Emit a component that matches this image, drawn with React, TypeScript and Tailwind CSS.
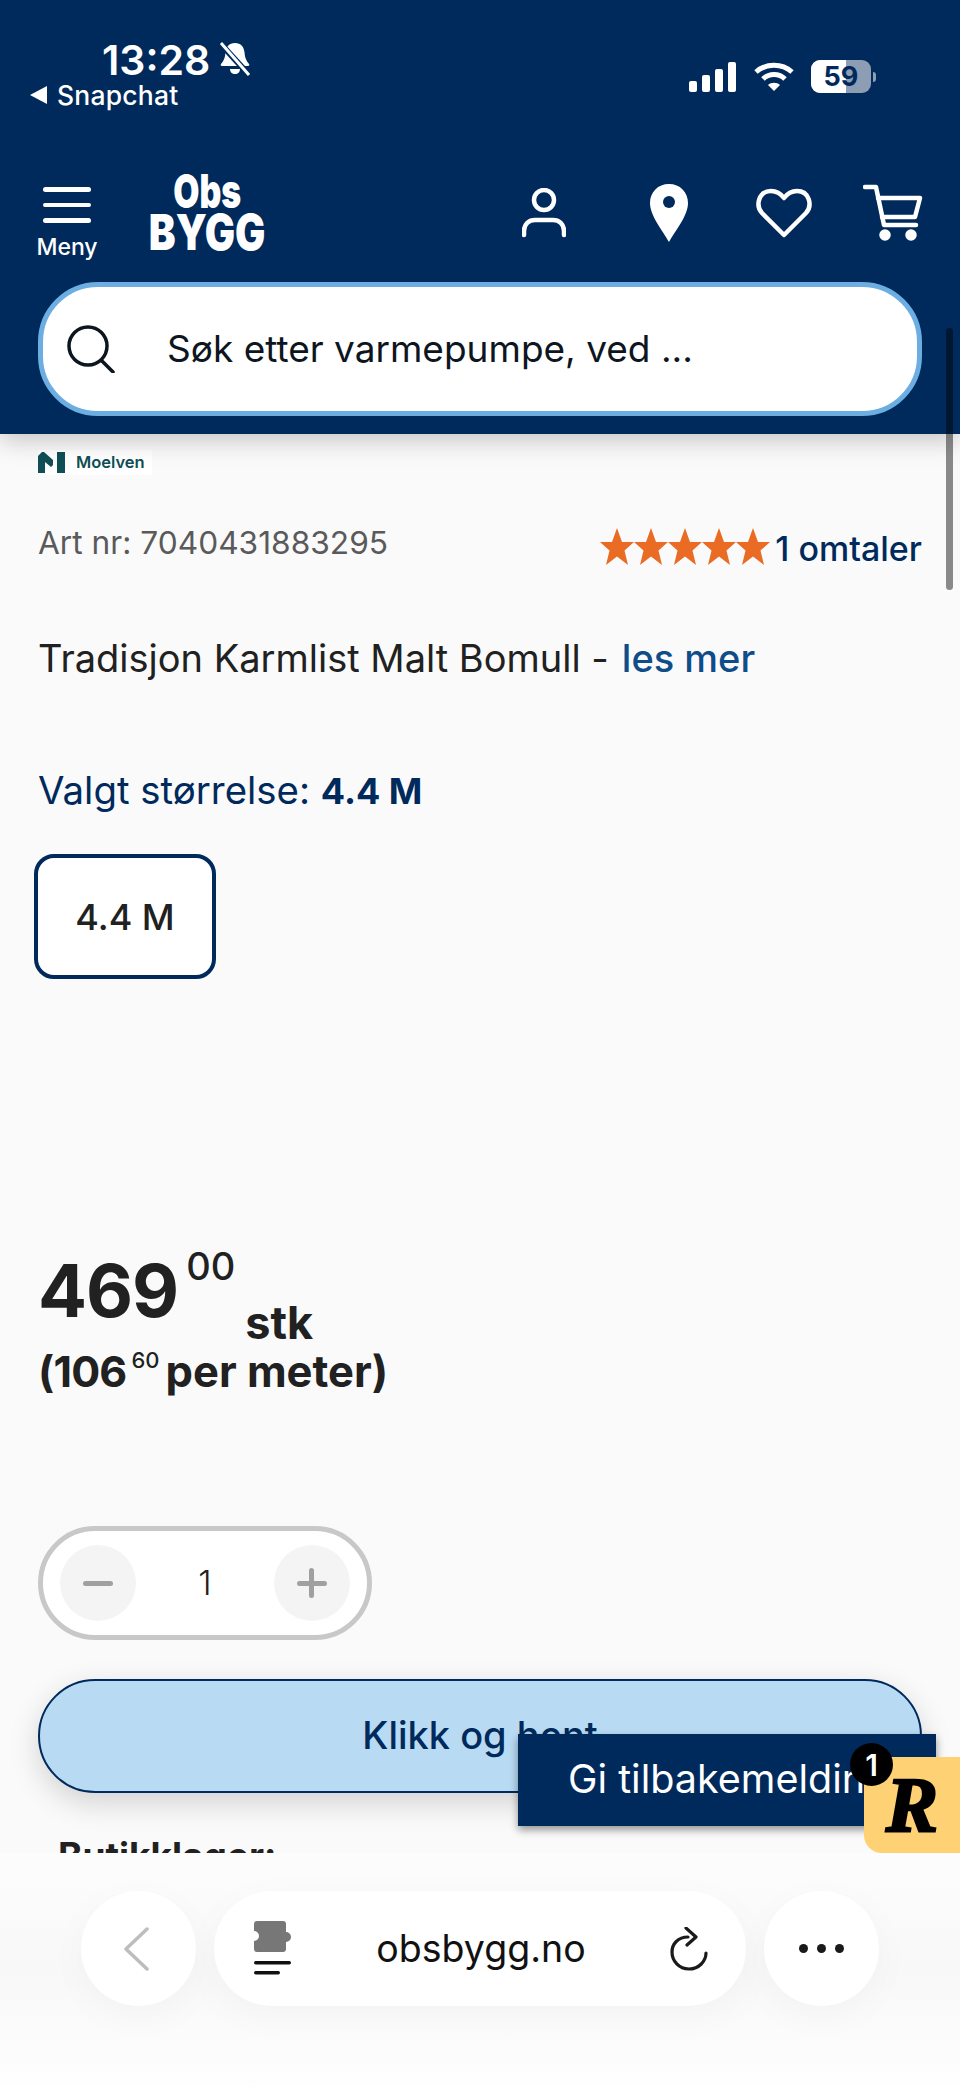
import React from "react";

const Bell = () => (
  <svg width="34" height="36" viewBox="0 0 32 36" fill="none">
    <path d="M16 1c-6 0-9 4-9.500 9.500-.4 5-1.500 8-4.500 11.500-.8 1 0 2 1 2h26c1 0 1.800-1 1-2-3-3.500-4.100-6.500-4.500-11.500C25 5 22 1 16 1z" fill="#fff" />
    <path d="M11 27h10c0 3-2 5-5 5s-5-2-5-5z" fill="#fff" />
    <path d="M1 1l30 33" stroke="#002a5c" strokeWidth="6" />
    <path d="M2 1l28 32" stroke="#fff" strokeWidth="3" />
  </svg>
);

const Signal = () => (
  <svg width="48" height="30" viewBox="0 0 48 30" fill="#fff">
    <rect x="0" y="19" width="8" height="11" rx="2" />
    <rect x="13" y="13" width="8" height="17" rx="2" />
    <rect x="26" y="7" width="8" height="23" rx="2" />
    <rect x="39" y="0" width="8" height="30" rx="2" />
  </svg>
);

const Wifi = () => (
  <svg width="40" height="30" viewBox="0 0 40 30" fill="none" stroke="#fff" strokeWidth="5">
    <path d="M2 10c10-9 26-9 36 0" />
    <path d="M9 17c6-6 16-6 22 0" />
    <path d="M20 29l-6-6c3-3 9-3 12 0z" fill="#fff" stroke="none" />
  </svg>
);

const Battery = () => (
  <div className="flex items-center">
    <div className="relative w-[60px] h-[33px] rounded-[9px] bg-[#8d9db3] overflow-hidden">
      <div className="absolute left-0 top-0 h-full w-[35px] bg-white" />
      <div className="absolute inset-0 flex items-center justify-center text-[27px] font-bold text-[#002a5c] leading-none">59</div>
    </div>
    <div className="w-[3px] h-[10px] ml-[2px] rounded-r-full bg-[#8d9db3]" />
  </div>
);

const User = () => (
  <svg width="44" height="50" viewBox="0 0 44 50" fill="none" stroke="#fff" strokeWidth="4.500" strokeLinecap="round">
    <circle cx="22" cy="12" r="10" />
    <path d="M2 47v-4c0-7 5-11 11-11h18c6 0 11 4 11 11v4" />
  </svg>
);

const Pin = () => (
  <svg width="38" height="58" viewBox="0 0 38 58">
    <path d="M19 0C8 0 0 8 0 19c0 13 13 28 19 39 6-11 19-26 19-39C38 8 30 0 19 0z" fill="#fff" />
    <circle cx="19" cy="18" r="6" fill="#002a5c" />
  </svg>
);

const Heart = () => (
  <svg width="56" height="50" viewBox="0 0 56 50" fill="none" stroke="#fff" strokeWidth="4.500" strokeLinejoin="round">
    <path d="M28 47L6 25C-1 17 3 3 15 3c6 0 10 3 13 7 3-4 7-7 13-7 12 0 16 14 9 22z" />
  </svg>
);

const Cart = () => (
  <svg width="60" height="58" viewBox="0 0 60 58" fill="none" stroke="#fff" strokeWidth="4.500" strokeLinecap="round" strokeLinejoin="round">
    <path d="M2 3h11l8 38h32" />
    <path d="M15 14h42l-5 19H19" />
    <circle cx="22" cy="51" r="3.500" fill="#fff" />
    <circle cx="48" cy="51" r="3.500" fill="#fff" />
  </svg>
);

const Search = () => (
  <svg width="48" height="48" viewBox="0 0 48 48" fill="none" stroke="#0d1620" strokeWidth="3.500" strokeLinecap="round">
    <circle cx="21" cy="21" r="19" />
    <path d="M35 36l11 11" />
  </svg>
);

const Star = () => (
  <svg width="34" height="37" viewBox="0 0 34 37" className="shrink-0">
    <path d="M17 0l5 14h12l-9.500 8.500 3.500 14.500-11-8.500L6 37l3.500-14.500L0 14h12z" fill="#e96b24" />
  </svg>
);

const MoelvenMark = () => (
  <svg width="28" height="21" viewBox="0 0 28 21" fill="#0f4f55">
    <path d="M0 21V4l4-4h2l9 8 0 5-2 2-6-5v11z" />
    <rect x="19" y="0" width="8" height="21" />
  </svg>
);

const Extension = () => (
  <svg width="38" height="56" viewBox="0 0 38 56">
    <path d="M3 0h26a3 3 0 0 1 3 3v8a5 5 0 1 1 0 10v7a3 3 0 0 1-3 3H3a3 3 0 0 1-3-3v-8a5 5 0 1 0 0-10V3a3 3 0 0 1 3-3z" fill="#777" />
    <rect x="0" y="40" width="37" height="3.500" rx="1.700" fill="#111" />
    <rect x="0" y="50" width="26" height="3.500" rx="1.700" fill="#111" />
  </svg>
);

const Reload = () => (
  <svg width="38" height="44" viewBox="0 0 38 44" fill="none" stroke="#1a1a1a" strokeWidth="3.200" strokeLinecap="round" strokeLinejoin="round">
    <path d="M18 10C8 10 2 17 2 25c0 9 7 17 17 17s17-8 17-16" />
    <path d="M16 1l10 9-9 8" />
  </svg>
);

export default function App() {
  return (
    <div className="relative flex flex-col w-[960px] h-[2087px] overflow-hidden bg-[#fafafa] font-['Inter',sans-serif] text-[#212121]">
      <header className="relative z-10 shrink-0 h-[434px] bg-[#002a5c] text-white shadow-[0_6px_24px_rgba(0,0,0,0.22)] flex flex-col">
        <div className="flex justify-between items-start h-[172px] pt-[38px] pl-[30px] pr-[84px]">
          <div className="flex flex-col">
            <div className="flex items-center gap-[8px] pl-[72px] h-[44px]">
              <span className="text-[41px] font-semibold leading-none">13:28</span>
              <Bell />
            </div>
            <div className="flex items-center gap-[10px] h-[26px]">
              <span className="w-0 h-0 border-y-[9px] border-y-transparent border-r-[17px] border-r-white" />
              <span className="text-[26.500px] font-medium leading-none tracking-[0.2px]">Snapchat</span>
            </div>
          </div>
          <div className="flex items-center gap-[17px] pt-[22px]">
            <Signal />
            <Wifi />
            <Battery />
          </div>
        </div>
        <div className="flex items-start h-[110px] pl-[36px]">
          <div className="flex flex-col items-center w-[62px]">
            <div className="flex flex-col gap-[11px] w-[48px] mt-[15px]">
              <div className="h-[4.500px] rounded-full bg-white" />
              <div className="h-[4.500px] rounded-full bg-white" />
              <div className="h-[4.500px] rounded-full bg-white" />
            </div>
            <span className="text-[23px] font-medium leading-none mt-[13px]">Meny</span>
          </div>
          <div className="flex flex-col items-center w-[114px] ml-[52px] font-black">
            <span className="text-[47px] leading-[42px] scale-x-[0.72] -mt-[2px]">Obs</span>
            <span className="text-[49px] leading-[40px] mt-[1px] scale-x-[0.82] whitespace-nowrap">BYGG</span>
          </div>
          <div className="flex items-center ml-auto pr-[37px] h-[82px]">
            <User />
            <div className="ml-[84px]"><Pin /></div>
            <div className="ml-[68px]"><Heart /></div>
            <div className="ml-[51px]"><Cart /></div>
          </div>
        </div>
        <div className="flex items-center mx-[38px] h-[134px] bg-white rounded-[60px] border-[5px] border-[#6daee2] pl-[24px] text-[#0d1620]">
          <Search />
          <span className="ml-[52px] -mt-[1px] text-[37px] leading-none">Søk etter varmepumpe, ved ...</span>
        </div>
      </header>

      <main className="flex-1 min-h-0 overflow-hidden px-[38px]">
        <div className="mt-[16px] w-[114px] h-[25px] bg-white flex items-center gap-[10px]">
          <MoelvenMark />
          <span className="text-[16.500px] font-semibold text-[#0f4f55] leading-none">Moelven</span>
        </div>
        <div className="flex justify-between items-center mt-[50px] h-[44px]">
          <span className="text-[31.700px] text-[#5a5a5a] leading-none -mt-[8px]">Art nr: 7040431883295</span>
          <div className="flex items-center gap-[5px]">
            <div className="flex -mt-[2px]">
              <Star /><Star /><Star /><Star /><Star />
            </div>
            <span className="mt-[3px] text-[34px] font-medium text-[#002a5c] leading-none">1 omtaler</span>
          </div>
        </div>
        <p className="mt-[67px] text-[38px] leading-[44px]">
          Tradisjon Karmlist Malt Bomull -<span className="ml-[13px] font-medium text-[#0f4c8a]">les mer</span>
        </p>
        <p className="mt-[88px] text-[38.400px] leading-[44px] text-[#002a5c]">
          Valgt størrelse: <span className="font-bold text-[36px]">4.4 M</span>
        </p>
        <div className="-ml-[4px] mt-[41px] w-[182px] h-[125px] flex items-center justify-center rounded-[20px] bg-white border-[4.500px] border-[#002a5c] text-[36px] font-medium">
          4.4 M
        </div>
        <div className="mt-[274px] flex items-start h-[94px]">
          <span className="text-[72.500px] font-bold leading-[76px] tracking-[-1px]">469</span>
          <span className="ml-[8px] -mt-[6px] text-[38px] font-medium leading-[38px]">00</span>
          <span className="ml-[10px] mt-[46px] text-[45px] font-bold leading-[48px]">stk</span>
        </div>
        <div className="flex items-start h-[50px] -mt-[1px] text-[43px] font-bold leading-[50px]">
          <span className="tracking-[-0.8px]">(106</span>
          <span className="ml-[5px] mt-[2px] text-[22px] font-medium leading-[24px]">60</span>
          <span className="ml-[6px] text-[43.500px]">per meter)</span>
        </div>
        <div className="mt-[130px] w-[334px] h-[114px] flex items-center justify-between rounded-full bg-white border-[5px] border-[#c8c8c8] px-[17px]">
          <div className="w-[76px] h-[76px] rounded-full bg-[#f4f4f4] flex items-center justify-center">
            <div className="w-[30px] h-[5px] rounded-full bg-[#a0a0a0]" />
          </div>
          <span className="text-[34px] font-light leading-none">1</span>
          <div className="relative w-[76px] h-[76px] rounded-full bg-[#f4f4f4] flex items-center justify-center">
            <div className="w-[30px] h-[5px] rounded-full bg-[#a0a0a0]" />
            <div className="absolute w-[5px] h-[30px] rounded-full bg-[#a0a0a0]" />
          </div>
        </div>
        <div className="mt-[39px] w-[884px] h-[114px] flex items-center justify-center rounded-[57px] bg-[#b8daf3] border-2 border-[#002a5c] shadow-[0_10px_30px_rgba(0,0,0,0.16)] text-[38px] font-medium text-[#002a5c]">
          <span className="-mt-[2px]">Klikk og hent</span>
        </div>
        <p className="ml-[20px] mt-[41px] text-[37px] font-bold leading-[44px]">Butikklager:</p>
      </main>

      <footer className="relative z-10 shrink-0 h-[234px] bg-gradient-to-b from-[#fdfdfd] via-[#f8f8f8] to-[#fefefe] flex items-start gap-[18px] pl-[81px] pt-[38px]">
        <div className="w-[115px] h-[115px] rounded-full bg-white shadow-[0_10px_40px_rgba(0,0,0,0.03)] flex items-center justify-center">
          <svg width="26" height="44" viewBox="0 0 26 44" fill="none" stroke="#bdbdbd" strokeWidth="3.500" strokeLinecap="round" strokeLinejoin="round" className="-ml-[6px]">
            <path d="M24 2L3 22l21 20" />
          </svg>
        </div>
        <div className="w-[532px] h-[115px] rounded-full bg-white shadow-[0_10px_40px_rgba(0,0,0,0.03)] flex items-center justify-between pl-[40px] pr-[38px]">
          <Extension />
          <span className="text-[37.500px] text-[#111] leading-none">obsbygg.no</span>
          <Reload />
        </div>
        <div className="w-[115px] h-[115px] rounded-full bg-white shadow-[0_10px_40px_rgba(0,0,0,0.03)] flex items-center justify-center gap-[9px]">
          <div className="w-[9px] h-[9px] rounded-full bg-[#1a1a1a]" />
          <div className="w-[9px] h-[9px] rounded-full bg-[#1a1a1a]" />
          <div className="w-[9px] h-[9px] rounded-full bg-[#1a1a1a]" />
        </div>
      </footer>

      <div className="absolute z-20 left-[518px] top-[1734px] w-[418px] h-[92px] bg-[#002a5c] shadow-[0_4px_8px_rgba(0,0,0,0.4)] flex items-center pl-[50px] text-[39.500px] text-white whitespace-nowrap overflow-hidden">
        Gi tilbakemelding
      </div>
      <div className="absolute z-20 left-[864px] top-[1757px] w-[96px] h-[96px] bg-[#fed274] rounded-bl-[18px] flex items-center justify-center font-['Liberation_Serif',serif] italic font-bold text-[78px] leading-none text-black [-webkit-text-stroke:2.500px_black]">
        R
      </div>
      <div className="absolute z-30 left-[850px] top-[1743px] w-[43px] h-[43px] rounded-full bg-black flex items-center justify-center text-[30px] font-semibold text-white leading-none">
        1
      </div>
      <div className="absolute z-20 left-[946px] top-[328px] w-[7px] h-[262px] rounded-full bg-[#000000]/45" />
    </div>
  );
}
